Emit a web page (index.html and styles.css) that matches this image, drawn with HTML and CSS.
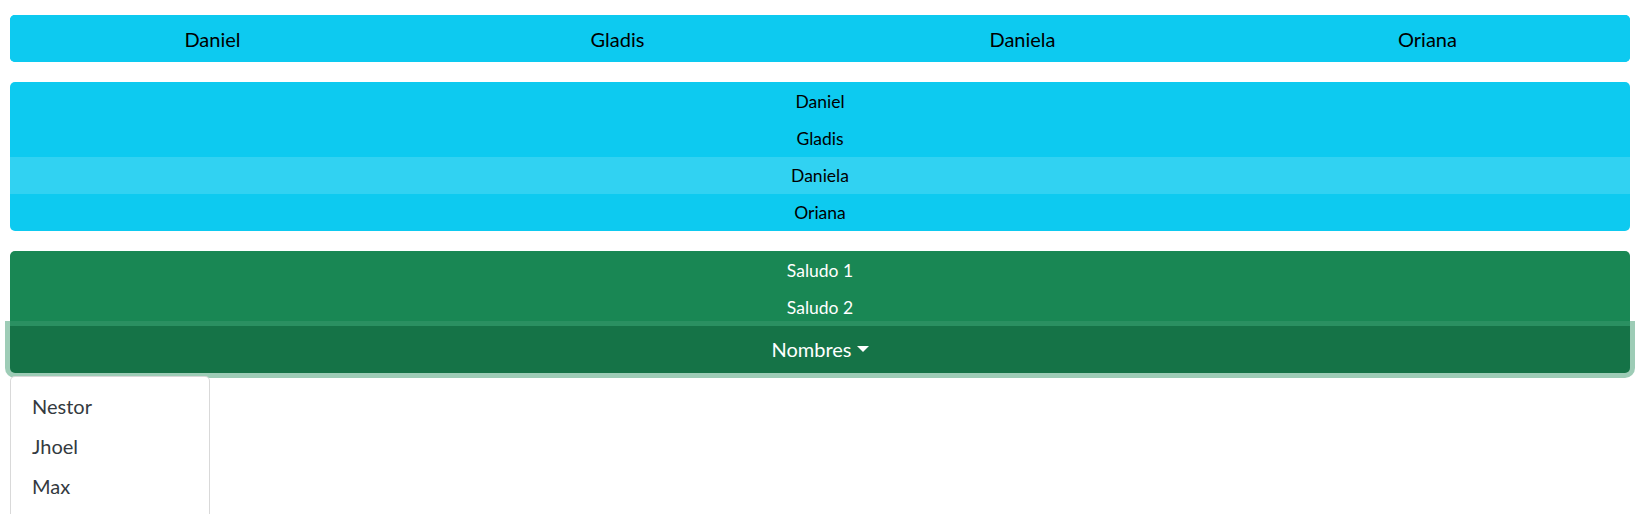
FILE: index.html
```html
<!DOCTYPE html>
<html lang="es">
<head>
<meta charset="utf-8">
<title>Botones</title>
<link rel="stylesheet" href="styles.css">
</head>
<body>
<div class="page">
  <div class="hgroup">
    <button class="btn info">Daniel</button>
    <button class="btn info">Gladis</button>
    <button class="btn info">Daniela</button>
    <button class="btn info">Oriana</button>
  </div>

  <div class="vgroup">
    <button class="row info">Daniel</button>
    <button class="row info">Gladis</button>
    <button class="row info hover">Daniela</button>
    <button class="row info">Oriana</button>
  </div>

  <div class="vgroup green-group">
    <button class="row success first">Saludo 1</button>
    <button class="row success">Saludo 2</button>
    <div class="dropdown">
      <button class="toggle">Nombres<span class="caret"></span></button>
      <ul class="menu">
        <li class="item">Nestor</li>
        <li class="item">Jhoel</li>
        <li class="item">Max</li>
      </ul>
    </div>
  </div>
</div>
</body>
</html>
```
FILE: styles.css
```css
* { box-sizing: border-box; }
html, body { margin: 0; padding: 0; background: #fff; }
body {
  font-family: Lato, "Open Sans", "Liberation Sans", sans-serif;
  color: #212529;
  overflow: hidden;
  height: 514px;
}
.page {
  padding: 15px 11px 0 10px;
  display: flex;
  flex-direction: column;
  gap: 20px;
}
button {
  font-family: inherit;
  border: 0;
  margin: 0;
  cursor: pointer;
}
.hgroup {
  display: flex;
  height: 47px;
  border-radius: 5px;
  overflow: hidden;
  background: #0dcaf0;
}
.btn {
  flex: 1;
  font-size: 20px;
  padding: 0;
  color: #000;
  background: #0dcaf0;
}
.vgroup {
  display: flex;
  flex-direction: column;
}
.row {
  height: 37.25px;
  font-size: 17.5px;
  padding: 1px 0 0 0;
  display: flex;
  align-items: center;
  justify-content: center;
}
.info { background: #0dcaf0; color: #000; }
.info.hover { background: #31d2f2; }
.vgroup > .info:first-child { border-radius: 5px 5px 0 0; }
.vgroup > .info:last-child { border-radius: 0 0 5px 5px; }
.success { background: #198754; color: #fff; }
.success.first { border-radius: 5px 5px 0 0; }
.dropdown {
  position: relative;
  z-index: 1;
}
.toggle {
  width: 100%;
  height: 47px;
  font-size: 20px;
  color: #fff;
  background: #157347;
  border-radius: 0 0 5px 5px;
  box-shadow: 0 0 0 5px rgba(60, 153, 110, 0.5);
  display: flex;
  align-items: center;
  justify-content: center;
  padding-top: 0;
}
.caret {
  display: inline-block;
  margin-left: 5px;
  border-top: 6px solid #fff;
  border-left: 6px solid transparent;
  border-right: 6px solid transparent;
  margin-top: 1px;
}
.menu {
  position: absolute;
  top: 50px;
  left: 0;
  width: 200px;
  height: 160px;
  margin: 0;
  padding: 9px 0 0 0;
  list-style: none;
  background: #fff;
  border: 1px solid rgba(0, 0, 0, 0.15);
  border-radius: 5px;
}
.item {
  font-size: 20px;
  line-height: 30px;
  padding: 5px 21px;
  color: #343a40;
}
```
